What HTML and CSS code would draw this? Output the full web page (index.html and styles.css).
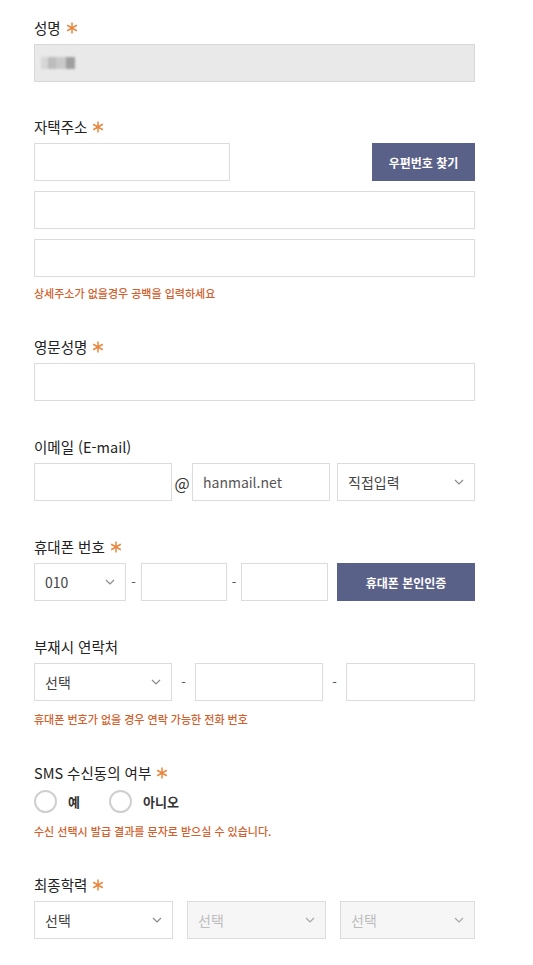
FILE: index.html
```html
<!DOCTYPE html>
<html lang="ko">
<head>
<meta charset="utf-8">
<link rel="stylesheet" href="styles.css">
</head>
<body>
<form class="form">
  <div class="field field-first">
    <div class="label">성명 <svg class="req" viewBox="0 0 12 12"><path d="M6 0.5v11M1.2 3.25l9.6 5.5M1.2 8.75l9.6-5.5"/></svg></div>
    <div class="input readonly"><span class="blur"></span></div>
  </div>

  <div class="field">
    <div class="label">자택주소 <svg class="req" viewBox="0 0 12 12"><path d="M6 0.5v11M1.2 3.25l9.6 5.5M1.2 8.75l9.6-5.5"/></svg></div>
    <div class="stack">
      <div class="row zip">
        <div class="input zip-input"></div>
        <button type="button" class="btn zip-btn">우편번호 찾기</button>
      </div>
      <div class="input"></div>
      <div class="input"></div>
    </div>
    <p class="help">상세주소가 없을경우 공백을 입력하세요</p>
  </div>

  <div class="field">
    <div class="label">영문성명 <svg class="req" viewBox="0 0 12 12"><path d="M6 0.5v11M1.2 3.25l9.6 5.5M1.2 8.75l9.6-5.5"/></svg></div>
    <div class="input"></div>
  </div>

  <div class="field">
    <div class="label">이메일 (E-mail)</div>
    <div class="row email">
      <div class="input"></div>
      <span class="at">@</span>
      <div class="input text">hanmail.net</div>
      <div class="input select">직접입력<svg class="chev" viewBox="0 0 10 6"><path d="M1 1l4 4 4-4"/></svg></div>
    </div>
  </div>

  <div class="field">
    <div class="label">휴대폰 번호 <svg class="req" viewBox="0 0 12 12"><path d="M6 0.5v11M1.2 3.25l9.6 5.5M1.2 8.75l9.6-5.5"/></svg></div>
    <div class="row phone">
      <div class="input select">010<svg class="chev" viewBox="0 0 10 6"><path d="M1 1l4 4 4-4"/></svg></div>
      <span class="dash">-</span>
      <div class="input"></div>
      <span class="dash">-</span>
      <div class="input"></div>
      <button type="button" class="btn">휴대폰 본인인증</button>
    </div>
  </div>

  <div class="field">
    <div class="label">부재시 연락처</div>
    <div class="row alt">
      <div class="input select">선택<svg class="chev" viewBox="0 0 10 6"><path d="M1 1l4 4 4-4"/></svg></div>
      <span class="dash">-</span>
      <div class="input"></div>
      <span class="dash">-</span>
      <div class="input"></div>
    </div>
    <p class="help help-gap">휴대폰 번호가 없을 경우 연락 가능한 전화 번호</p>
  </div>

  <div class="field">
    <div class="label">SMS 수신동의 여부 <svg class="req" viewBox="0 0 12 12"><path d="M6 0.5v11M1.2 3.25l9.6 5.5M1.2 8.75l9.6-5.5"/></svg></div>
    <div class="radios">
      <label class="radio"><span class="circle"></span>예</label>
      <label class="radio"><span class="circle"></span>아니오</label>
    </div>
    <p class="help help-gap">수신 선택시 발급 결과를 문자로 받으실 수 있습니다.</p>
  </div>

  <div class="field">
    <div class="label">최종학력 <svg class="req" viewBox="0 0 12 12"><path d="M6 0.5v11M1.2 3.25l9.6 5.5M1.2 8.75l9.6-5.5"/></svg></div>
    <div class="edu">
      <div class="input select">선택<svg class="chev" viewBox="0 0 10 6"><path d="M1 1l4 4 4-4"/></svg></div>
      <div class="input select disabled">선택<svg class="chev" viewBox="0 0 10 6"><path d="M1 1l4 4 4-4"/></svg></div>
      <div class="input select disabled">선택<svg class="chev" viewBox="0 0 10 6"><path d="M1 1l4 4 4-4"/></svg></div>
    </div>
  </div>
</form>
</body>
</html>
```

FILE: styles.css
```css
html, body {
  margin: 0;
  padding: 0;
  background: #fff;
}
body {
  font-family: "Noto Sans CJK KR", "Noto Sans", sans-serif;
  color: #333;
}
.form {
  width: 441px;
  padding: 18px 0 0 34px;
}
.field {
  margin-bottom: 36px;
}
.field-first {
  margin-bottom: 35px;
}
.label {
  height: 20px;
  line-height: 20px;
  font-size: 14.5px;
  font-weight: 400;
  color: #222;
  margin-bottom: 6px;
  display: flex;
  align-items: center;
  gap: 5px;
}
.req {
  width: 12px;
  height: 12px;
  fill: none;
  stroke: #e8873f;
  stroke-width: 1.5;
}
.input {
  box-sizing: border-box;
  height: 38px;
  border: 1px solid #dcdcdc;
  background: #fff;
  font-size: 14px;
  color: #444;
  display: flex;
  align-items: center;
  padding: 0 10px;
}
.readonly {
  background: #e9e9e9;
  border-color: #d8d8d8;
  padding-left: 6px;
}
.blur {
  width: 34px;
  height: 12px;
  background: linear-gradient(90deg, #d6d6d6 0 20%, #bcbcbc 20% 45%, #c9c9c9 45% 75%, #9f9f9f 75% 100%);
  filter: blur(1.2px);
}
.stack {
  display: flex;
  flex-direction: column;
  gap: 10px;
}
.row {
  display: flex;
  align-items: center;
}
.zip {
  justify-content: space-between;
}
.zip-input {
  width: 196px;
}
.btn {
  box-sizing: border-box;
  height: 38px;
  border: 0;
  background: #5a6189;
  color: #fff;
  font-family: "Noto Sans CJK KR", sans-serif;
  font-size: 12px;
  font-weight: 700;
  padding: 0;
}
.zip-btn {
  width: 103px;
}
.help {
  margin: 8px 0 0;
  font-size: 11px;
  line-height: 16px;
  color: #d2602c;
  font-weight: 500;
}
.help-gap {
  margin-top: 10px;
}
.email .input {
  width: 138px;
  flex: none;
}
.email .at {
  width: 20px;
  text-align: center;
  font-size: 16px;
  color: #333;
  padding-top: 2px;
}
.email .select {
  margin-left: 7px;
}
.text {
  color: #555;
}
.select {
  justify-content: space-between;
}
.chev {
  width: 10px;
  height: 6px;
  fill: none;
  stroke: #8a8a8a;
  stroke-width: 1.2;
}
.disabled {
  background: #f6f6f6;
  color: #bdbdbd;
}
.disabled .chev {
  stroke: #a8a8a8;
}
.phone > * {
  flex: none;
}
.phone .select {
  width: 92px;
}
.phone .dash {
  width: 15px;
}
.phone .input:nth-of-type(2) {
  width: 86px;
}
.phone .dash + .input + .dash {
  width: 14px;
}
.phone .input:nth-of-type(3) {
  width: 87px;
}
.phone .btn {
  width: 138px;
  margin-left: 9px;
}
.dash {
  text-align: center;
  font-size: 13px;
  color: #555;
  padding-bottom: 2px;
}
.alt > * {
  flex: none;
}
.alt .select {
  width: 138px;
}
.alt .dash {
  width: 23px;
}
.alt .input:nth-of-type(2) {
  width: 128px;
}
.alt .input:nth-of-type(3) {
  width: 129px;
}
.radios {
  display: flex;
  align-items: center;
  height: 24px;
  gap: 29px;
}
.radio {
  display: flex;
  align-items: center;
  gap: 11px;
  font-size: 13px;
  font-weight: 700;
  color: #333;
}
.circle {
  box-sizing: border-box;
  width: 23px;
  height: 23px;
  border: 2px solid #cfcfcf;
  border-radius: 50%;
  background: #fff;
}
.edu {
  display: grid;
  grid-template-columns: 139px 139px 135px;
  gap: 14px;
}
```
